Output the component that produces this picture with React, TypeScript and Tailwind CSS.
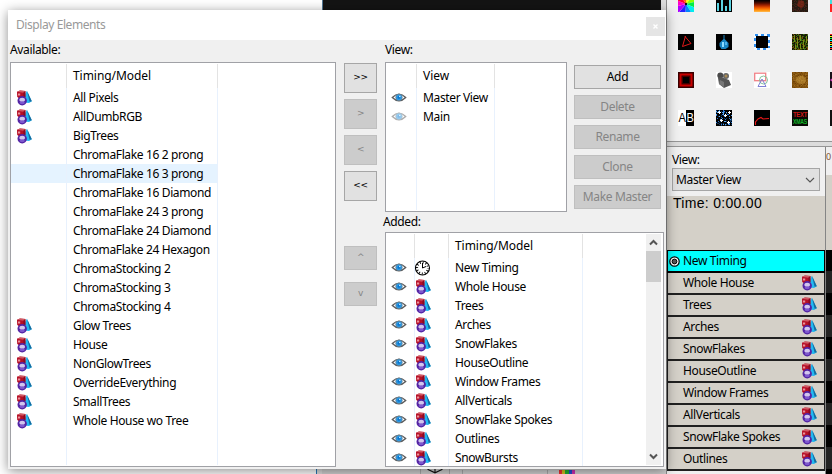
import React from "react";

const available: [string, boolean][] = [
  ["All Pixels", true], ["AllDumbRGB", true], ["BigTrees", true],
  ["ChromaFlake 16 2 prong", false], ["ChromaFlake 16 3 prong", false], ["ChromaFlake 16 Diamond", false],
  ["ChromaFlake 24 3 prong", false], ["ChromaFlake 24 Diamond", false], ["ChromaFlake 24 Hexagon", false],
  ["ChromaStocking 2", false], ["ChromaStocking 3", false], ["ChromaStocking 4", false],
  ["Glow Trees", true], ["House", true], ["NonGlowTrees", true], ["OverrideEverything", true],
  ["SmallTrees", true], ["Whole House wo Tree", true],
];
const added = ["New Timing", "Whole House", "Trees", "Arches", "SnowFlakes", "HouseOutline", "Window Frames", "AllVerticals", "SnowFlake Spokes", "Outlines", "SnowBursts"];
const tracks = added.slice(1, 10);

function ModelIcon() {
  return (
    <svg width="16" height="16" viewBox="0 0 16 16" className="shrink-0">
      <path d="M10.8 .8 L15.8 11.2 L13 13 L8.5 12.5 L9.2 4Z" fill="#22b8f2" />
      <path d="M11 .8 L15.8 11.2 L13.6 11.8 Z" fill="#176a9c" />
      <path d="M1 1.8 L4 .4 L9.4 .9 V7 L8 8.5 L3 8.5 L1.2 6.8 Z" fill="#b50f26" />
      <path d="M1 1.8 L4 .4 L9.4 .9 L7.4 2.8 Z" fill="#cf5963" />
      <path d="M7.4 2.8 L9.4 1 V7 L7.4 8 Z" fill="#8a0a22" />
      <path d="M2 3.5 h2.2 v2 h-2.2 Z" fill="#ec929a" />
      <circle cx="6.2" cy="10.8" r="4.7" fill="#5223a4" />
      <ellipse cx="6.2" cy="9.7" rx="2.8" ry="2" fill="#d2c6ee" />
      <ellipse cx="6.2" cy="12.8" rx="2.6" ry="1.4" fill="#7d58ce" />
    </svg>
  );
}

function Eye({ dim = false }: { dim?: boolean }) {
  return (
    <svg width="16" height="16" viewBox="0 0 16 16" className={dim ? "opacity-50" : ""}>
      <path d="M1.3 7.5 Q8 .8 14.7 7.5 Q8 14.2 1.3 7.5Z" fill="#fff" stroke="#5b5b5b" strokeWidth="1.3" />
      <circle cx="8" cy="7.4" r="3.3" fill="#2b9ae6" stroke="#777" strokeWidth=".6" />
      <circle cx="8" cy="7.4" r="1.4" fill="#0a74cc" />
      <rect x="8" y="5.8" width="1.5" height="1.3" fill="#bde4ff" />
    </svg>
  );
}

function Clock() {
  return (
    <svg width="16" height="16" viewBox="0 0 16 16">
      <circle cx="7.5" cy="8" r="7" fill="#fff" stroke="#000" strokeWidth="1.1" />
      <circle cx="7.5" cy="8" r="5.5" fill="none" stroke="#000" strokeWidth="2.2" strokeDasharray=".9 1.98" strokeDashoffset=".45" />
      <path d="M7.5 3 V8 L11 6.5" fill="none" stroke="#000" strokeWidth="1" />
    </svg>
  );
}

type ColumnProps = { width: string; header?: string; cells: React.ReactNode[]; line?: boolean; pad?: string; selected?: number };
function Column({ width, header = "", cells, line = true, pad = "pl-[6px]", selected = -1 }: ColumnProps) {
  const edge = line ? "border-r" : "";
  return (
    <div className={`flex shrink-0 flex-col ${width}`}>
      <div className={`mt-px h-6 shrink-0 border-[#e3e3e3] leading-6 tracking-[-0.05px] ${edge} ${pad}`}>{header}</div>
      {cells.map((c, i) => (
        <div key={i} className={`flex h-[19px] shrink-0 items-center border-[#e8f1fd] ${edge} ${pad} ${i === selected ? "bg-[#e5f3ff]" : ""}`}>{c}</div>
      ))}
      <div className={`mb-px flex-1 border-[#e8f1fd] ${edge}`} />
    </div>
  );
}

function Button({ children, size, off = false }: { children: React.ReactNode; size: string; off?: boolean }) {
  return (
    <button className={`flex shrink-0 items-center justify-center border ${size} ${off ? "border-[#bfbfbf] bg-[#cccccc] text-[#858585]" : "border-[#a6a6a6] bg-[#e1e1e1] text-black"}`}>
      {children}
    </button>
  );
}

function Pixels({ colors, density, seed, bg }: { colors: string[]; density: number; seed: number; bg: string }) {
  const dots: React.ReactNode[] = [];
  let s = seed;
  for (let y = 0; y < 16; y++)
    for (let x = 0; x < 16; x++) {
      s = (s * 1103515 + 12345) % 2147483647;
      const r = Math.floor(s / 65536);
      if (r % 100 < density) dots.push(<rect key={`${x}-${y}`} x={x} y={y} width="1" height="1" fill={colors[r % colors.length]} />);
    }
  return <><rect width="16" height="16" fill={bg} />{dots}</>;
}

const wheel = ["#ff0", "#8f0", "#0e4", "#0ee", "#08f", "#22f", "#a0f", "#f0c", "#f03", "#f60"];
const bars = ["#f22", "#ff0", "#0e4", "#0ff", "#f60", "#ff0", "#0ee", "#f33"];
const flames = ["#000", "#000", "#000", "#000", "#0c0000", "#240400", "#400a00", "#601000", "#861a00", "#a82800", "#c83a00", "#e25000", "#f46800", "#ff8008", "#ff9a18", "#ffb040"];
const effects: React.ReactNode[][] = [
  [
    <>
      <rect width="16" height="16" fill="#fff" />
      {wheel.map((c, i) => {
        const a = (i * Math.PI) / 5 - 1.5, b = a + 0.63;
        return <path key={c} d={`M8 8 L${8 + 13 * Math.cos(a)} ${8 + 13 * Math.sin(a)} L${8 + 13 * Math.cos(b)} ${8 + 13 * Math.sin(b)}Z`} fill={c} />;
      })}
      <circle cx="8" cy="8" r="1.2" fill="#111" />
    </>,
    <><rect width="16" height="16" fill="#000" /><path d="M1 7h2v8H1zM5 4h2v11H5zM9 10h2v5H9zM13 4h2v11h-2z" fill="#5cd5e4" /></>,
    <>{flames.map((c, i) => <rect key={i} y={i} width="16" height="1" fill={c} />)}</>,
    <><Pixels bg="#281a14" colors={["#3a2418", "#20200e", "#4b2018"]} density={60} seed={8} /><circle cx="9" cy="8" r="3.5" fill="#9a2c18" opacity=".6" /></>,
    <><rect width="16" height="16" fill="#f22" /><rect width="16" height="8" fill="#4dd" /></>,
  ],
  [
    <><rect width="16" height="16" fill="#000" /><path d="M7.5 2 L4.5 12.5 L13 9.5 L7 2.5" fill="none" stroke="#e01818" strokeWidth="1" /></>,
    <><rect width="16" height="16" fill="#000" /><path d="M7.5 1 h1 v4 l4 4 v4 l-3 2 h-4 l-2-3 v-3 l4-4z" fill="#1885c4" /><path d="M6 8h2v5H6z" fill="#8edcff" /><path d="M9 8h2v3H9z" fill="#50b4ec" /></>,
    <><rect width="16" height="16" fill="#f4faff" /><path d="M1 0h3v2H1zM7 0h3v2H7zM13 0h3v3h-3zM0 4h2v3H0zM0 10h2v3H0zM14 6h2v3h-2zM14 12h2v2h-2zM3 14h3v2H3zM9 14h3v2H9z" fill="#2d8ef0" /><rect x="2" y="2" width="12" height="12" fill="#000" /></>,
    <><Pixels bg="#181c04" colors={["#5c6210", "#287018", "#7a4b08", "#344d08"]} density={50} seed={21} /><path d="M2.5 1v7M5.5 4v9M8.5 1v6M11.5 6v9M14.5 2v7M3.5 11v4M8.5 10v5" stroke="#789018" strokeWidth="1" /></>,
    <><rect width="16" height="16" fill="#000" />{bars.map((c, i) => <rect key={i} y={i * 2} width="16" height="1" fill={c} />)}</>,
  ],
  [
    <><rect width="16" height="16" fill="#390000" /><rect x="2.5" y="2.5" width="11" height="11" fill="#400000" stroke="#c90000" strokeWidth="2" /><rect x="5" y="5" width="6" height="6" fill="#000" /></>,
    <><rect width="16" height="16" fill="#fff" /><circle cx="4.3" cy="3.5" r="3" fill="#4a4a4a" /><circle cx="10" cy="4" r="3" fill="#666" /><circle cx="10" cy="4" r="1.5" fill="#a98b54" /><path d="M2 6 L5 5 L13 8 L15 13 L8 16 L3 12Z" fill="#555" /><path d="M4 8 L8 10 L8 15 L3 12Z" fill="#777" /></>,
    <><rect width="16" height="16" fill="#fff" /><rect x=".7" y="1.2" width="11" height="7.5" fill="none" stroke="#f08086" strokeWidth="1.3" /><circle cx="9.5" cy="8" r="4" fill="none" stroke="#86c49a" /><path d="M4 14.5 L8 7 L12 14.5Z" fill="none" stroke="#7e80d4" /></>,
    <><Pixels bg="#80500c" colors={["#8d5a14", "#704208", "#986a1c", "#885812"]} density={65} seed={91} /><ellipse cx="9" cy="8" rx="5" ry="4" fill="#d4a444" opacity=".5" /></>,
    <><rect width="16" height="16" fill="#181018" /><path d="M0 8 L4 5 V11Z" fill="#d43cc0" /></>,
  ],
  [
    <><rect width="8" height="16" fill="#fff" /><rect x="8" width="8" height="16" fill="#000" /><text x=".4" y="12" fontSize="12" textLength="7" lengthAdjust="spacingAndGlyphs" fontFamily="Liberation Sans, sans-serif" fill="#000">A</text><text x="8.6" y="12" fontSize="12" textLength="7" lengthAdjust="spacingAndGlyphs" fontFamily="Liberation Sans, sans-serif" fill="#fff">B</text></>,
    <><Pixels bg="#000" colors={["#2678dc", "#5aa8f4", "#0c355f"]} density={26} seed={37} /><path d="M3.5 1v3M2 2.5h3M9.5 4v3M8 5.5h3M5.5 9v3M4 10.5h3M12.5 11v3M11 12.5h3M13.5 1v3M12 2.5h3" stroke="#fff" strokeWidth="1" /></>,
    <><rect width="16" height="16" fill="#000" /><path d="M1.5 15 V12 L4 9 L7 7.5 L9 9 L15 8.5" fill="none" stroke="#e81818" strokeWidth="1.1" /></>,
    <><rect width="16" height="16" fill="#0a0a06" /><text x="1" y="7.2" fontSize="7" textLength="14" lengthAdjust="spacingAndGlyphs" fontWeight="bold" fontFamily="Liberation Sans, sans-serif" fill="#d01818">TEXT</text><text x="1" y="14.2" fontSize="7" textLength="14" lengthAdjust="spacingAndGlyphs" fontWeight="bold" fontFamily="Liberation Sans, sans-serif" fill="#10b828">XMAS</text></>,
    <rect width="16" height="16" fill="#111" />,
  ],
];

function Effects() {
  return (
    <div className="flex h-[142px] shrink-0 flex-col gap-[22px] overflow-hidden border-b border-[#969696] bg-[#f0f0f0] pl-[11px]">
      {effects.map((row, y) => (
        <div key={y} className={`flex shrink-0 gap-[22px] ${y === 0 ? "-mt-1" : ""}`}>
          {row.map((icon, x) => <svg key={x} width="16" height="16" viewBox="0 0 16 16" className="shrink-0 overflow-hidden">{icon}</svg>)}
        </div>
      ))}
    </div>
  );
}

function Sequencer() {
  return (
    <div className="flex w-[166px] shrink-0 flex-col border-l border-[#8a8a8a] bg-[#dcdcdc]">
      <Effects />
      <div className="mt-[4px] flex flex-1 border-t border-[#969696]">
        <div className="flex w-[158px] shrink-0 flex-col bg-[#f0f0f0]">
          <div className="h-[21px] pl-[5px] pt-[5px] leading-4">View:</div>
          <div className="ml-[5px] flex h-[23px] w-[148px] items-center justify-between border border-[#a6a6a6] bg-[#e1e1e1] pl-[3px] pr-1">
            <span className="pt-px">Master View</span>
            <svg width="10" height="6" viewBox="0 0 10 6"><path d="M1 1 L5 5 L9 1" fill="none" stroke="#555" strokeWidth="1.1" /></svg>
          </div>
          <div className="mt-[5px] h-[54px] shrink-0 bg-[#d4d0c8] pl-[6px] font-['Liberation_Sans',sans-serif] text-[14px] leading-[15px] tracking-[0.3px]">Time: 0:00.00</div>
          <div className="flex h-[23px] shrink-0 items-center gap-[3px] border border-b-2 border-black bg-[#00ffff] pl-[1px]">
            <svg width="11" height="11" viewBox="0 0 11 11"><circle cx="5.5" cy="5.5" r="4.7" fill="#fff" stroke="#000" strokeWidth="1.2" /><circle cx="5.5" cy="5.5" r="2.4" fill="#555" stroke="#000" /></svg>
            <span>New Timing</span>
          </div>
          {tracks.map((t) => (
            <div key={t} className="flex h-[22px] shrink-0 items-center justify-between border-x border-b-2 border-[#202020] bg-[#d4d0c8] pl-[15px] pr-[7px]">
              <span>{t}</span><ModelIcon />
            </div>
          ))}
        </div>
        <div className="flex w-[7px] flex-col overflow-hidden border-l border-[#858585] bg-black">
          <div className="h-7 shrink-0 bg-[#f0f0f0] pt-[2px] text-[9px] leading-4 text-[#805030]">0</div>
          <div className="h-[75px] shrink-0 bg-[#d4d0c8]" />
          <div className="h-[21px] shrink-0 bg-black" />
          {tracks.map((t, i) => <div key={t} className={`h-[22px] shrink-0 ${i % 2 ? "bg-black" : "bg-[#232323]"}`} />)}
        </div>
      </div>
    </div>
  );
}

function Scrollbar() {
  return (
    <div className="mb-px mr-[2px] mt-px flex w-[15px] flex-col bg-[#f0f0f0]">
      <div className="flex h-[17px] items-center justify-center"><svg width="9" height="7" viewBox="0 0 9 7"><path d="M1 5.5 L4.5 2 L8 5.5" fill="none" stroke="#555" strokeWidth="2" /></svg></div>
      <div className="h-[31px] bg-[#cdcdcd]" />
      <div className="flex-1" />
      <div className="flex h-[17px] items-center justify-center"><svg width="9" height="7" viewBox="0 0 9 7"><path d="M1 1.5 L4.5 5 L8 1.5" fill="none" stroke="#555" strokeWidth="2" /></svg></div>
    </div>
  );
}

function Dialog() {
  const list = "flex shrink-0 justify-start overflow-hidden border border-[#a0a1a6] bg-white";
  return (
    <section className="absolute left-[8px] top-[10px] flex h-[459px] w-[658px] flex-col bg-[#f0f0f0] shadow-[0_2px_11px_rgba(0,0,0,0.45)]">
      <header className="flex h-[30px] shrink-0 items-center justify-between bg-white pl-2 pr-px text-[#999]">
        <span className="tracking-[-0.42px]">Display Elements</span>
        <button className="mt-[3px] flex h-[19px] w-[19px] items-center justify-center bg-[#e5e5e5]"><svg width="5" height="5" viewBox="0 0 5 5"><path d="M.5.5 4.5 4.5M4.5.5.5 4.5" stroke="#fff" strokeWidth="1.4" /></svg></button>
      </header>
      <div className="flex pl-[2px]">
        <div>
          <div className="h-[22px] leading-5">Available:</div>
          <div className={`${list} h-[405px] w-[326px]`}>
            <Column width="w-[56px]" cells={available.map(([, m]) => m && <ModelIcon />)} pad="pl-[5px]" selected={4} />
            <Column width="w-[151px]" header="Timing/Model" cells={available.map(([n]) => n)} selected={4} />
          </div>
        </div>
        <div className="ml-2 mt-[23px] flex flex-col gap-[6px] font-['DejaVu_Sans',sans-serif] text-[9px]">
          <Button size="h-[30px] w-[33px]">&gt;&gt;</Button>
          <Button size="h-[30px] w-[33px]" off>&gt;</Button>
          <Button size="h-[30px] w-[33px]" off>&lt;</Button>
          <Button size="h-[30px] w-[33px]">&lt;&lt;</Button>
          <div className="mt-[39px] flex flex-col gap-3">
            <Button size="h-[24px] w-[33px]" off>^</Button>
            <Button size="h-[24px] w-[33px]" off>v</Button>
          </div>
        </div>
        <div className="ml-2">
          <div className="h-[22px] leading-5">View:</div>
          <div className="flex gap-[7px]">
            <div className={`${list} h-[150px] w-[182px]`}>
              <Column width="w-[31px]" cells={[<Eye />, <Eye dim />]} pad="pl-[5px]" />
              <Column width="w-[78px]" header="View" cells={["Master View", "Main"]} />
            </div>
            <div className="mt-[3px] flex flex-col gap-[6px]">
              <Button size="h-[24px] w-[87px]">Add</Button>
              {["Delete", "Rename", "Clone", "Make Master"].map((b) => <Button key={b} size="h-[24px] w-[87px]" off>{b}</Button>)}
            </div>
          </div>
          <div className="-ml-[2px] h-5 leading-5">Added:</div>
          <div className={`${list} h-[235px] w-[279px]`}>
            <Column width="w-[29px]" cells={added.map(() => <Eye />)} pad="pl-[5px]" />
            <Column width="w-[34px]" cells={added.map((_, i) => (i === 0 ? <Clock /> : <ModelIcon />))} pad="pl-0" />
            <Column width="w-[134px]" header="Timing/Model" cells={added} />
            <div className="flex-1" />
            <Scrollbar />
          </div>
        </div>
      </div>
    </section>
  );
}

export default function App() {
  return (
    <main className="relative flex h-[474px] w-[832px] overflow-hidden bg-white font-['Noto_Sans','Open_Sans',sans-serif] text-[12px] tracking-[-0.36px] text-black">
      <div className="flex w-[322px] shrink-0 items-end justify-end">
        <div className="h-2 w-[6px] border-l border-[#2878b8] bg-[#dcdcdc]" />
      </div>
      <div className="flex w-[344px] shrink-0 flex-col justify-between bg-[#dcdcdc]">
        <div className="h-[14px] w-[339px] border-l border-[#527896] bg-[#141414]" />
        <div className="flex h-2 items-end bg-[#d0d0d0] pl-[98px]">
          <svg width="30" height="6" viewBox="0 0 30 6" className="border-x border-[#aaa]"><path d="M7 1 L15 5 L23 1M15 0V5" fill="none" stroke="#111" strokeWidth="1.2" /></svg>
          <div className="ml-3 h-1 w-[86px] border-x border-[#aaa]" />
          <div className="ml-[11px] flex h-[4px] w-[16px]"><i className="flex-1 bg-[#e33]" /><i className="flex-1 bg-[#d2c020]" /><i className="flex-1 bg-[#20b030]" /><i className="flex-1 bg-[#2050d0]" /><i className="flex-1 bg-[#d030b0]" /></div>
        </div>
      </div>
      <Sequencer />
      <Dialog />
    </main>
  );
}
